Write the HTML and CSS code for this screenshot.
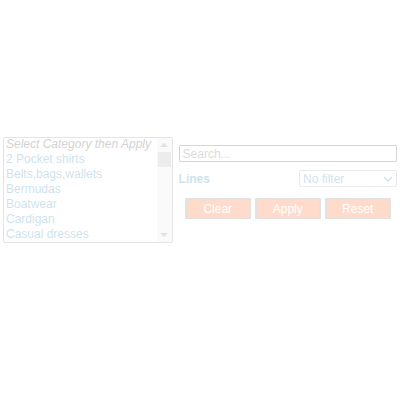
FILE: index.html
```html
<!DOCTYPE html>
<html lang="en">
<head>
    <meta charset="UTF-8">
    <meta name="viewport" content="width=device-width, initial-scale=1.0">
    <title>Category filter</title>
    <link rel="stylesheet" href="styles.css">
</head>
<body>
    <div class="filter-widget">
        <div class="category-list">
            <ul class="options">
                <li class="hint">Select Category then Apply</li>
                <li>2 Pocket shirts</li>
                <li>Belts,bags,wallets</li>
                <li>Bermudas</li>
                <li>Boatwear</li>
                <li>Cardigan</li>
                <li>Casual dresses</li>
            </ul>
            <div class="scrollbar">
                <span class="arrow up"></span>
                <div class="track"><div class="thumb"></div></div>
                <span class="arrow down"></span>
            </div>
        </div>
        <div class="filter-panel">
            <input type="text" class="search" placeholder="Search...">
            <div class="lines-row">
                <label class="lines-label">Lines</label>
                <div class="select-wrap">
                    <select class="lines-select">
                        <option>No filter</option>
                    </select>
                    <svg class="chevron" width="10" height="6" viewBox="0 0 10 6">
                        <path d="M1 1 L5 5 L9 1" fill="none" stroke="#5fa2c6" stroke-width="1.3"/>
                    </svg>
                </div>
            </div>
            <div class="buttons">
                <button type="button">Clear</button>
                <button type="button">Apply</button>
                <button type="button">Reset</button>
            </div>
        </div>
    </div>
</body>
</html>
```
FILE: styles.css
```css
* {
    box-sizing: border-box;
}

body {
    margin: 0;
    font-family: 'Liberation Sans', Arial, sans-serif;
    font-size: 12px;
    background-color: #fff;
}

.filter-widget {
    display: flex;
    align-items: flex-start;
    gap: 6px;
    padding: 137px 3px 0 3px;
    opacity: 0.3;
}

.category-list {
    width: 170px;
    height: 106px;
    border: 1px solid #a9a9a9;
    border-radius: 2px;
    display: flex;
    overflow: hidden;
}

.options {
    flex: 1;
    list-style: none;
    margin: -1px 0 0 0;
    padding: 0 2px;
    font-size: 12px;
    line-height: 15px;
    color: #5fa2c6;
    white-space: nowrap;
    overflow: hidden;
}

.options .hint {
    font-style: italic;
    color: #6d6d6d;
}

.scrollbar {
    width: 15px;
    display: flex;
    flex-direction: column;
    background-color: #f1f1f1;
}

.arrow {
    height: 14px;
    display: flex;
    align-items: center;
    justify-content: center;
}

.arrow::before {
    content: '';
    border-left: 4px solid transparent;
    border-right: 4px solid transparent;
}

.arrow.up::before {
    border-bottom: 4px solid #a3a3a3;
}

.arrow.down::before {
    border-top: 4px solid #a3a3a3;
}

.track {
    flex: 1;
    padding: 0 1px;
}

.thumb {
    height: 15px;
    background-color: #c1c1c1;
}

.filter-panel {
    width: 219px;
    margin-top: 8px;
    display: flex;
    flex-direction: column;
}

.search {
    width: 100%;
    height: 17px;
    border: 1px solid #767676;
    border-radius: 1px;
    padding: 0 3px;
    font-family: 'Liberation Sans', Arial, sans-serif;
    font-size: 12px;
}

.search::placeholder {
    color: #8a8a8a;
}

.lines-row {
    display: flex;
    justify-content: space-between;
    align-items: center;
    margin-top: 8px;
}

.lines-label {
    font-weight: bold;
    font-size: 12px;
    color: #5fa2c6;
}

.select-wrap {
    position: relative;
    width: 98px;
}

.lines-select {
    appearance: none;
    width: 100%;
    height: 17px;
    border: 1px solid #b8b8b8;
    border-radius: 2px;
    background: #fff;
    padding: 0 3px;
    font-family: 'Liberation Sans', Arial, sans-serif;
    font-size: 12px;
    color: #5fa2c6;
}

.chevron {
    position: absolute;
    right: 4px;
    top: 6px;
}

.buttons {
    display: flex;
    justify-content: center;
    gap: 4px;
    margin-top: 11px;
}

.buttons button {
    width: 66px;
    height: 21px;
    background-color: #ff8a55;
    color: #fff;
    border: 2px solid #a0a0a0;
    border-radius: 1px;
    font-family: 'Liberation Sans', Arial, sans-serif;
    font-size: 12px;
    padding: 0;
}
```
